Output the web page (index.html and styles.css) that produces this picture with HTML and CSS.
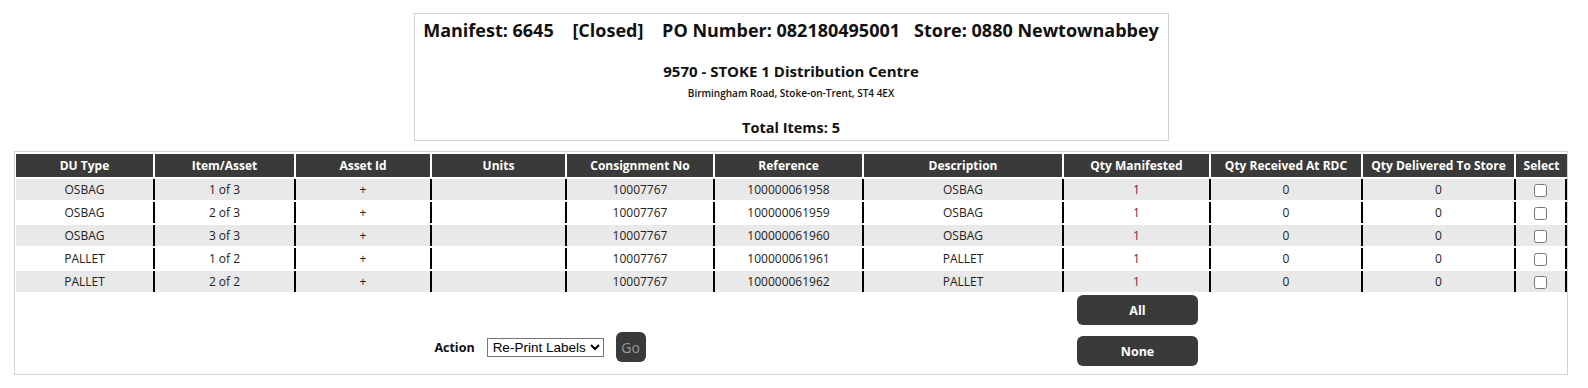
FILE: index.html
```html
<!DOCTYPE html>
<html>
<head>
<meta charset="utf-8">
<title>Manifest 6645</title>
<link rel="stylesheet" href="styles.css">
</head>
<body>
<div class="page">
  <div class="summary">
    <div class="title">Manifest: 6645&nbsp;&nbsp;&nbsp; [Closed]&nbsp;&nbsp;&nbsp; PO Number: 082180495001&nbsp;&nbsp; Store: 0880 Newtownabbey</div>
    <div class="dc">9570 - STOKE 1 Distribution Centre</div>
    <div class="addr">Birmingham Road, Stoke-on-Trent, ST4 4EX</div>
    <div class="total">Total Items: 5</div>
  </div>
  <div class="grid-box">
    <table class="grid">
      <colgroup>
        <col class="c1"><col class="c2"><col class="c3"><col class="c4"><col class="c5"><col class="c6"><col class="c7"><col class="c8"><col class="c9"><col class="c10"><col class="c11">
      </colgroup>
      <thead>
        <tr>
          <th>DU Type</th><th>Item/Asset</th><th>Asset Id</th><th>Units</th><th>Consignment No</th><th>Reference</th><th>Description</th><th>Qty Manifested</th><th>Qty Received At RDC</th><th>Qty Delivered To Store</th><th>Select</th>
        </tr>
      </thead>
      <tbody>
        <tr class="alt"><td>OSBAG</td><td>1 of 3</td><td>+</td><td></td><td>10007767</td><td>100000061958</td><td>OSBAG</td><td class="qty">1</td><td>0</td><td>0</td><td><input type="checkbox"></td></tr>
        <tr><td>OSBAG</td><td>2 of 3</td><td>+</td><td></td><td>10007767</td><td>100000061959</td><td>OSBAG</td><td class="qty">1</td><td>0</td><td>0</td><td><input type="checkbox"></td></tr>
        <tr class="alt"><td>OSBAG</td><td>3 of 3</td><td>+</td><td></td><td>10007767</td><td>100000061960</td><td>OSBAG</td><td class="qty">1</td><td>0</td><td>0</td><td><input type="checkbox"></td></tr>
        <tr><td>PALLET</td><td>1 of 2</td><td>+</td><td></td><td>10007767</td><td>100000061961</td><td>PALLET</td><td class="qty">1</td><td>0</td><td>0</td><td><input type="checkbox"></td></tr>
        <tr class="alt"><td>PALLET</td><td>2 of 2</td><td>+</td><td></td><td>10007767</td><td>100000061962</td><td>PALLET</td><td class="qty">1</td><td>0</td><td>0</td><td><input type="checkbox"></td></tr>
      </tbody>
      <tfoot>
        <tr>
          <td colspan="7" class="action-cell">
            <div class="action">
              <label class="action-label">Action</label>
              <select class="action-select"><option>Re-Print Labels</option></select>
              <button class="go" disabled>Go</button>
            </div>
          </td>
          <td class="btn-cell">
            <button class="btn">All</button>
            <button class="btn">None</button>
          </td>
          <td colspan="3"></td>
        </tr>
      </tfoot>
    </table>
  </div>
</div>
</body>
</html>
```
FILE: styles.css
```css
html, body {
  margin: 0;
  padding: 0;
  background: #fff;
}
body {
  font-family: "Open Sans", "Noto Sans", sans-serif;
  color: #111;
}
.page {
  padding: 13px 20px 0 14px;
}
.summary {
  width: 753px;
  height: 126px;
  margin: 0 auto;
  border: 1px solid #d3d3d3;
  text-align: center;
  display: flex;
  flex-direction: column;
  align-items: center;
}
.title {
  font-weight: 700;
  font-size: 18px;
  line-height: 24px;
  margin-top: 4px;
  white-space: nowrap;
}
.dc {
  font-weight: 700;
  font-size: 15px;
  line-height: 20px;
  margin-top: 19px;
}
.addr {
  font-weight: 600;
  font-size: 10px;
  line-height: 14px;
  margin-top: 5px;
}
.total {
  font-weight: 700;
  font-size: 14.5px;
  line-height: 20px;
  margin-top: 18px;
}
.grid-box {
  margin-top: 10px;
  border: 1px solid #d3d3d3;
  padding: 0 1px;
  height: 222px;
}
.grid {
  table-layout: fixed;
  width: 1551px;
  border-collapse: separate;
  border-spacing: 0 2px;
  font-size: 12px;
}
.c1 { width: 139px; }
.c2 { width: 141px; }
.c3 { width: 136px; }
.c4 { width: 135px; }
.c5 { width: 148px; }
.c6 { width: 149px; }
.c7 { width: 200px; }
.c8 { width: 147px; }
.c9 { width: 152px; }
.c10 { width: 153px; }
.c11 { width: 51px; }
.grid th {
  background: #3a3a3a;
  color: #fff;
  font-weight: 700;
  font-size: 12px;
  height: 23px;
  padding: 0;
  border-right: 2px solid #fff;
  white-space: nowrap;
  box-sizing: border-box;
}
.grid th:last-child {
  border-right: 0;
}
.grid tbody td {
  text-align: center;
  height: 21px;
  padding: 0;
  border-right: 2px solid #000;
  color: #222;
  box-sizing: border-box;
}
.grid tbody tr.alt td {
  background: #e9e9e9;
}
.grid td.qty {
  color: #6e1f3a;
}
.grid input[type="checkbox"] {
  margin: 0;
  width: 13px;
  height: 13px;
  vertical-align: middle;
}
.grid tfoot td {
  padding: 0;
}
.action-cell {
  vertical-align: top;
}
.action {
  display: flex;
  justify-content: center;
  align-items: center;
  margin-top: 38px;
}
.action-label {
  font-weight: 700;
  font-size: 12.5px;
  margin-right: 12px;
}
.action-select {
  font-family: "Liberation Sans", Arial, sans-serif;
  font-size: 13.5px;
  height: 19px;
  width: 117px;
  padding: 0 0 0 1px;
  border: 1px solid #767676;
  border-radius: 0;
  background: #fff;
  color: #000;
}
.go {
  margin-left: 12px;
  width: 30px;
  height: 30px;
  border: 0;
  border-radius: 6px;
  background: #3a3a3a;
  color: #999;
  font-family: "Open Sans", sans-serif;
  font-size: 14px;
  padding: 0;
}
.btn-cell {
  text-align: center;
  vertical-align: top;
  padding-top: 1px !important;
}
.btn {
  display: block;
  margin: 0 auto 11px;
  width: 121px;
  height: 30px;
  border: 0;
  border-radius: 6px;
  background: #3a3a3a;
  color: #fff;
  font-family: "Open Sans", sans-serif;
  font-weight: 700;
  font-size: 12.5px;
  padding: 0;
}
```
